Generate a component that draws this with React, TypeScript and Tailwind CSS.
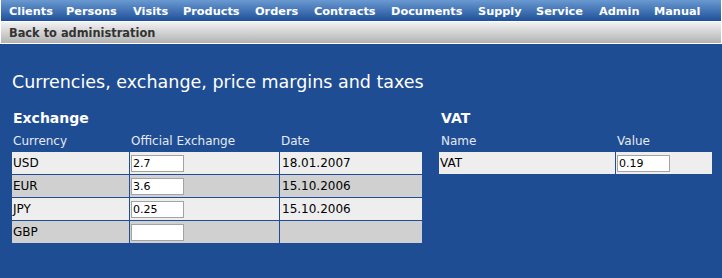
import React from 'react';

// menu items with the slot width each one takes in the bar
const menu = [
  { label: 'Clients', w: 'w-[57px]' },
  { label: 'Persons', w: 'w-[67px]' },
  { label: 'Visits', w: 'w-[50px]' },
  { label: 'Products', w: 'w-[72px]' },
  { label: 'Orders', w: 'w-[59px]' },
  { label: 'Contracts', w: 'w-[77px]' },
  { label: 'Documents', w: 'w-[87px]' },
  { label: 'Supply', w: 'w-[58px]' },
  { label: 'Service', w: 'w-[63px]' },
  { label: 'Admin', w: 'w-[55px]' },
  { label: 'Manual', w: 'w-[55px]' },
];

interface Rate {
  code: string;
  value: string;
  date: string;
}

const rates: Rate[] = [
  { code: 'USD', value: '2.7', date: '18.01.2007' },
  { code: 'EUR', value: '3.6', date: '15.10.2006' },
  { code: 'JPY', value: '0.25', date: '15.10.2006' },
  { code: 'GBP', value: '', date: '' },
];

const Field = ({ value }: { value: string }) => (
  <input
    defaultValue={value}
    className="h-[17px] w-[53px] border border-[#a3a3a3] bg-white px-px text-[11px] leading-[15px] text-black outline-none"
  />
);

const App = () => {
  return (
    <div className="h-[278px] w-[722px] overflow-hidden bg-white flex flex-col font-['DejaVu_Sans',sans-serif]">
      {/* top menu */}
      <div className="mx-px h-[21px] bg-gradient-to-b from-[#6a9ad0] to-[#1f5099] flex items-center pl-[8px] pt-[3px]">
        {menu.map((m) => (
          <span key={m.label} className={`${m.w} shrink-0 text-[11.3px] font-bold text-white leading-none`}>{m.label}</span>
        ))}
      </div>

      {/* sub bar */}
      <div className="mx-px mt-px h-[21px] bg-gradient-to-b from-[#f2f2f2] to-[#b3b3b3] flex items-center pl-[8px] pt-[3px]">
        <span className="text-[11.4px] font-bold text-[#333333] leading-none">Back to administration</span>
      </div>

      {/* content */}
      <div className="mt-px flex-1 bg-[#1f4d93] px-[12px] pt-[27px] text-white">
        <h1 className="text-[17.5px] leading-[22px] font-normal">Currencies, exchange, price margins and taxes</h1>

        <div className="mt-[15px] flex gap-[17px]">
          {/* Exchange */}
          <div className="w-[410px]">
            <h2 className="text-[14px] leading-[20px] font-bold pl-px">Exchange</h2>
            <div className="mt-[3px] grid grid-cols-[117px_149px_142px] gap-x-px gap-y-px text-[12px]">
              <div className="h-[20px] leading-[20px] pl-px text-[#e4e9f2]">Currency</div>
              <div className="h-[20px] leading-[20px] pl-px text-[#e4e9f2]">Official Exchange</div>
              <div className="h-[20px] leading-[20px] pl-px text-[#e4e9f2]">Date</div>
              {rates.map((r, i) => {
                const bg = i % 2 === 0 ? 'bg-[#eeeeee]' : 'bg-[#d0d0d0]';
                return (
                  <React.Fragment key={r.code}>
                    <div className={`${bg} h-[22px] leading-[23px] pl-px text-black`}>{r.code}</div>
                    <div className={`${bg} h-[22px] flex items-center pl-px`}>
                      <Field value={r.value} />
                    </div>
                    <div className={`${bg} h-[22px] leading-[23px] pl-[2px] text-black`}>{r.date}</div>
                  </React.Fragment>
                );
              })}
            </div>
          </div>

          {/* VAT */}
          <div className="w-[273px]">
            <h2 className="text-[14px] leading-[20px] font-bold pl-[2px]">VAT</h2>
            <div className="mt-[3px] grid grid-cols-[176px_96px] gap-x-px gap-y-px text-[12px]">
              <div className="h-[20px] leading-[20px] pl-[2px] text-[#e4e9f2]">Name</div>
              <div className="h-[20px] leading-[20px] pl-px text-[#e4e9f2]">Value</div>
              <div className="bg-[#eeeeee] h-[22px] leading-[23px] pl-px text-black">VAT</div>
              <div className="bg-[#eeeeee] h-[22px] flex items-center pl-px">
                <Field value="0.19" />
              </div>
            </div>
          </div>
        </div>
      </div>
    </div>
  );
};

export default App;
